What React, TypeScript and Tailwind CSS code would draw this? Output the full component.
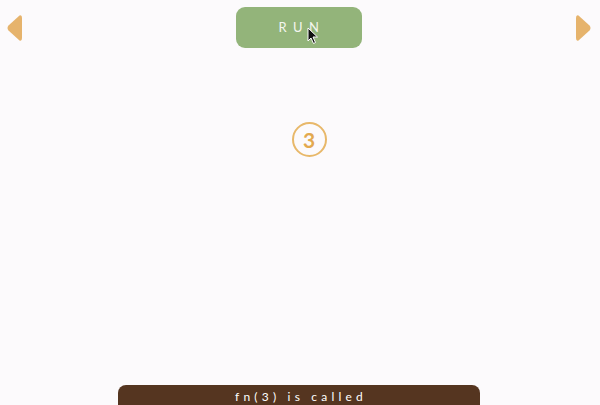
const Triangle = ({ dir }: { dir: "left" | "right" }) => (
  <svg width="17" height="28" viewBox="0 0 17 28" className="block">
    {dir === "left" ? (
      <path d="M13.5 1.5 Q16 0.5 16 4 L16 24 Q16 27.5 13.5 26.5 L2.5 16.5 Q0.5 14 2.5 11.5 Z" fill="#e6b36c" />
    ) : (
      <path d="M3.5 1.5 Q1 0.5 1 4 L1 24 Q1 27.5 3.5 26.5 L14.5 16.5 Q16.5 14 14.5 11.5 Z" fill="#e6b36c" />
    )}
  </svg>
);

const Cursor = () => (
  <svg width="12" height="18" viewBox="0 0 12 18" className="absolute left-[307px] top-[27px]">
    <path d="M1 1 L1 14 L4 11 L6.5 16.5 L8.5 15.5 L6 10 L10.5 10 Z" fill="#111" stroke="#fff" strokeWidth="1" strokeLinejoin="round" />
  </svg>
);

const App = () => {
  return (
    <div
      className="relative w-[600px] h-[405px] overflow-hidden bg-[#fcfafc] flex flex-col"
      style={{ fontFamily: "Lato, 'Noto Sans', sans-serif" }}
    >
      <div className="flex items-start justify-between pl-[6px] pr-[8px] pt-[14px]">
        <Triangle dir="left" />
        <div className="-mt-[7px] ml-[213px] mr-auto">
          <button className="w-[126px] h-[41px] rounded-[9px] bg-[#93b47a] text-[#f4f6ef] text-[13px] tracking-[0.5em] pl-[6px] flex items-center justify-center">
            RUN
          </button>
        </div>
        <Triangle dir="right" />
      </div>

      <div className="flex justify-center mt-[74px] ml-[18px]">
        <div className="w-[35px] h-[35px] rounded-full border-2 border-[#e8b86a] flex items-center justify-center text-[#e3a94f] text-[21px] font-bold leading-none">
          3
        </div>
      </div>

      <div className="mt-auto ml-[118px] w-[362px] h-[20px] rounded-t-[8px] bg-[#553520] flex items-center justify-center text-white text-[12px] tracking-[0.35em] pt-[3px] pl-[4px]">
        fn(3) is called
      </div>

      <Cursor />
    </div>
  );
};

export default App;
